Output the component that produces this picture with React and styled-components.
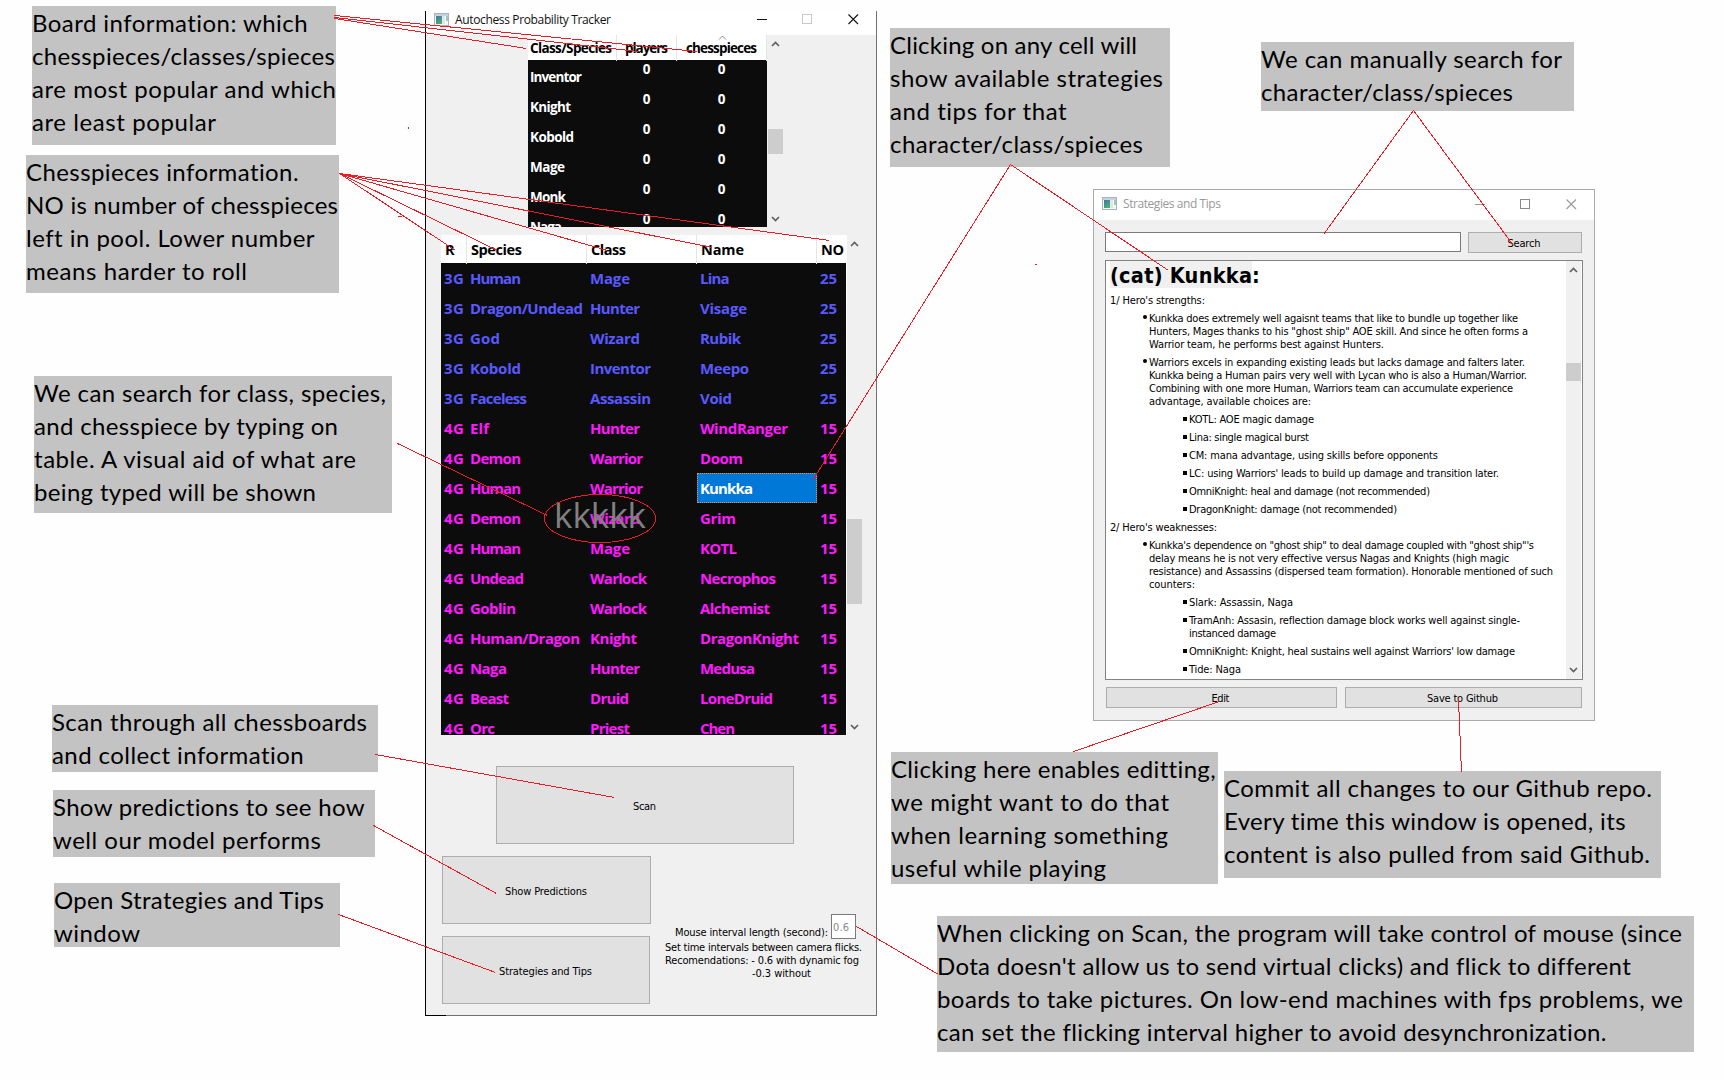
import React, { useLayoutEffect, useRef, useState } from "react";
import styled, { createGlobalStyle, css } from "styled-components";

const UI = `"DejaVu Sans Condensed", "DejaVu Sans", sans-serif`;
const TABLE = `"Open Sans", "Noto Sans", sans-serif`;
const NOTE = `Lato, "Open Sans", sans-serif`;

const GlobalStyle = createGlobalStyle`
  * { box-sizing: border-box; }
  body { margin: 0; background: #fefefe; overflow: hidden; }
`;

const Canvas = styled.main`
  position: relative;
  width: 1724px;
  height: 1080px;
  overflow: hidden;
  background: #fefefe;
  color: #000;
`;

/* ---------- text that is tracked to a given width ---------- */

const Run = styled.span`
  display: inline-block;
  white-space: pre;
`;

function Fit({ w, children }) {
  const ref = useRef(null);
  const [tracking, setTracking] = useState(0);
  useLayoutEffect(() => {
    const natural = ref.current.getBoundingClientRect().width;
    setTracking((w - natural) / Math.max(1, children.length - 1));
  }, [w, children]);
  return (
    <Run ref={ref} style={{ letterSpacing: `${tracking}px`, marginRight: `${-tracking}px` }}>
      {children}
    </Run>
  );
}

/* ---------- annotations ---------- */

const NoteBox = styled.div`
  position: absolute;
  left: ${(p) => p.$x}px;
  top: ${(p) => p.$y}px;
  width: ${(p) => p.$w}px;
  height: ${(p) => p.$h}px;
  background: #c3c3c3;
  font: 24px/33px ${NOTE};
`;

const NoteLine = styled.div`
  height: 33px;
  white-space: nowrap;
`;

const notes = [
  { box: [32, 6, 304, 139], lines: [["Board information: which", 276], ["chesspieces/classes/spieces", 303], ["are most popular and which", 304], ["are least popular", 184]] },
  { box: [26, 155, 313, 138], lines: [["Chesspieces information.", 273], ["NO is number of chesspieces", 312], ["left in pool. Lower number", 288], ["means harder to roll", 221]] },
  { box: [34, 376, 358, 137], lines: [["We can search for class, species,", 352], ["and chesspiece by typing on", 304], ["table. A visual aid of what are", 322], ["being typed will be shown", 282]] },
  { box: [52, 705, 326, 67], lines: [["Scan through all chessboards", 315], ["and collect information", 252]] },
  { box: [53, 790, 322, 67], lines: [["Show predictions to see how", 312], ["well our model performs", 268]] },
  { box: [54, 883, 286, 64], lines: [["Open Strategies and Tips", 270], ["window", 86]] },
  { box: [890, 28, 280, 139], lines: [["Clicking on any cell will", 247], ["show available strategies", 273], ["and tips for that", 177], ["character/class/spieces", 253]] },
  { box: [1261, 42, 313, 69], lines: [["We can manually search for", 301], ["character/class/spieces", 252]] },
  { box: [891, 752, 327, 132], lines: [["Clicking here enables editting,", 324], ["we might want to do that", 278], ["when learning something", 277], ["useful while playing", 215]] },
  { box: [1224, 771, 437, 107], lines: [["Commit all changes to our Github repo.", 428], ["Every time this window is opened, its", 402], ["content is also pulled from said Github.", 426]] },
  { box: [937, 916, 757, 136], lines: [["When clicking on Scan, the program will take control of mouse (since", 745], ["Dota doesn't allow us to send virtual clicks) and flick to different", 693], ["boards to take pictures. On low-end machines with fps problems, we", 746], ["can set the flicking interval higher to avoid desynchronization.", 670]] },
];

const Overlay = styled.svg`
  position: absolute;
  inset: 0;
  pointer-events: none;
  fill: none;
  stroke: #ed1c24;
  stroke-width: 1;
  shape-rendering: crispEdges;
`;

const pointers = [
  [334, 18, 526, 48], [334, 17, 638, 51], [334, 15, 697, 51],
  [339, 173, 455, 250], [339, 173, 497, 250], [339, 173, 607, 250], [339, 173, 712, 247], [339, 173, 829, 240],
  [397, 443, 547, 515],
  [1010, 164, 812, 480], [1010, 164, 1168, 270],
  [1413, 110, 1323, 234], [1413, 110, 1513, 245],
  [375, 754, 614, 797], [373, 825, 496, 893], [338, 914, 495, 972],
  [856, 926, 938, 974], [1073, 751, 1219, 701], [1458, 699, 1461, 772],
  [408, 126, 408, 128], [397, 216, 401, 216], [1034, 264, 1036, 264],
];

/* ---------- shared window parts ---------- */

const MainWindow = styled.section`
  position: absolute;
  left: 425px;
  top: 11px;
  width: 452px;
  height: 1005px;
  background: #f0f0f0;
  border: solid #707070;
  border-width: 0 1px 1px 0;
  border-left: 1px solid #000;
  font: 11px/13px ${UI};
  &::after {
    content: "";
    position: absolute;
    left: -1px;
    bottom: -1px;
    width: 21px;
    height: 1px;
    background: #000;
  }
`;

const TipsWindow = styled.section`
  position: absolute;
  left: 1093px;
  top: 189px;
  width: 502px;
  height: 532px;
  background: #f0f0f0;
  border: 1px solid #aaa;
  font: 11px/13px ${UI};
`;

const TitleBar = styled.header`
  display: flex;
  align-items: center;
  height: ${(p) => p.$h}px;
  padding: 0 ${(p) => p.$right}px ${(p) => p.$lift}px 8px;
  background: #fff;
  color: ${(p) => p.$ink};
  font: 12px/16px ${TABLE};
`;

const Title = styled.h1`
  flex: 1;
  margin: 0 0 0 5px;
  font: inherit;
`;

const Controls = styled.div`
  display: flex;
  gap: ${(p) => p.$gap}px;
`;

const Glyph = styled.svg`
  display: block;
  flex: none;
  fill: none;
  stroke: ${(p) => p.$c || "currentColor"};
`;

function AppIcon() {
  return (
    <Glyph width="16" height="14" viewBox="0 0 16 14" stroke="none">
      <defs>
        <linearGradient id="pane" x1="0" y1="0" x2="0.6" y2="1">
          <stop offset="0" stopColor="#3c77a8" />
          <stop offset="1" stopColor="#4fae72" />
        </linearGradient>
      </defs>
      <rect x="0.5" y="0.5" width="14" height="12" fill="#f4f6f8" stroke="#a9b3bc" />
      <rect x="1" y="1" width="13" height="2" fill="#c6d3df" stroke="none" />
      <rect x="2" y="3" width="6" height="8" fill="url(#pane)" stroke="none" />
      <rect x="8" y="3" width="3" height="8" fill="#e3e6e8" stroke="none" />
      <rect x="12" y="3" width="2" height="5" fill="#9cc6c4" stroke="none" />
    </Glyph>
  );
}

function WindowControls({ gap, maxColor }) {
  return (
    <Controls $gap={gap}>
      <Glyph width="11" height="11"><path d="M1 5.5H11" shapeRendering="crispEdges" /></Glyph>
      <Glyph width="11" height="11" $c={maxColor}><rect x="0.5" y="0.5" width="9" height="9" /></Glyph>
      <Glyph width="11" height="11"><path d="M0.5 0.5L10 10M10 0.5L0.5 10" strokeWidth="1.1" /></Glyph>
    </Controls>
  );
}

const Track = styled.div`
  display: flex;
  flex-direction: column;
  flex: none;
  width: 15px;
  height: ${(p) => p.$h}px;
  padding: ${(p) => p.$pad};
  background: #f0f0f0;
`;

const Thumb = styled.div`
  height: ${(p) => p.$h}px;
  margin: ${(p) => p.$gap}px 0 auto;
  background: #cdcdcd;
`;

const Arrow = styled(Glyph)`
  margin: 0 auto;
`;

function ScrollBar({ height, pad, thumbGap, thumb }) {
  return (
    <Track $h={height} $pad={pad}>
      <Arrow width="9" height="6" $c="#606060"><path d="M1 5L4.5 1.5L8 5" strokeWidth="1.7" /></Arrow>
      <Thumb $gap={thumbGap} $h={thumb} />
      <Arrow width="9" height="6" $c="#606060"><path d="M1 1L4.5 4.5L8 1" strokeWidth="1.7" /></Arrow>
    </Track>
  );
}

const Button = styled.button`
  display: flex;
  align-items: center;
  justify-content: center;
  flex: none;
  width: ${(p) => p.$w}px;
  height: ${(p) => p.$h}px;
  margin: 0;
  padding: ${(p) => p.$drop || 1}px ${(p) => (p.$drop ? 1 : 2)}px 0 0;
  border: 1px solid #adadad;
  background: #e1e1e1;
  color: #000;
  font: 11px/13px ${UI};
`;

/* ---------- main window tables ---------- */

const TableArea = styled.div`
  display: flex;
  margin: ${(p) => p.$m};
`;

const BoardTable = styled.div`
  width: 239px;
  height: 192px;
  margin-right: 1px;
  overflow: hidden;
  background: #0c0c0c;
  color: #fff;
  font: bold 13.5px/30px ${TABLE};
`;

const BoardRow = styled.div`
  display: grid;
  grid-template-columns: 89px 60px 90px;
  height: 30px;
`;

const BoardHead = styled(BoardRow)`
  height: 25px;
  background: #fff;
  color: #000;
  line-height: 26px;
`;

const headCell = css`
  white-space: nowrap;
  border-right: 1px solid #e5e5e5;
`;

const BoardHeadCell = styled.div`
  ${headCell}
  position: relative;
  padding-left: ${(p) => p.$pad}px;
`;

const SortMark = styled(Glyph)`
  position: absolute;
  left: 41px;
  top: 0;
`;

const BoardName = styled.div`
  padding: 1.5px 0 0 2px;
`;

const BoardCount = styled.div`
  text-align: center;
  line-height: 18px;
  padding-right: 1px;
`;

const boardRows = [["Inventor", 52], ["Knight", 41], ["Kobold", 44], ["Mage", 35], ["Monk", 36], ["Naga", 32]];

const PieceTable = styled.div`
  width: 406px;
  height: 500px;
  overflow: hidden;
  border-right: 1px solid #fff;
  background: #0c0c0c;
  font: bold 15px/30px ${TABLE};
`;

const PieceRow = styled.div`
  display: grid;
  grid-template-columns: 26px 120px 110px 120px 29px;
  height: 30px;
  color: ${(p) => p.$c};
`;

const PieceHead = styled(PieceRow)`
  height: 28px;
  margin-right: -1px;
  background: #fff;
  color: #000;
  font-size: 14.5px;
  line-height: 29px;
`;

const PieceHeadCell = styled.div`
  ${headCell}
  padding-left: 4px;
  &:last-child { border: 0; }
`;

const PieceCell = styled.div`
  padding-left: 3px;
  white-space: nowrap;
  ${(p) => p.$selected && css`
    background: #0078d7;
    color: #fff;
    outline: 1px dotted #f09040;
    outline-offset: -1px;
  `}
`;

const BLUE = "#5959ff";
const PINK = "#ff19ff";

const pieces = [
  ["3G", ["Human", 50], ["Mage", 39], ["Lina", 28.5], "25"],
  ["3G", ["Dragon/Undead", 112], ["Hunter", 49], ["Visage", 46], "25"],
  ["3G", ["God", 29], ["Wizard", 49], ["Rubik", 40], "25"],
  ["3G", ["Kobold", 50], ["Inventor", 60], ["Meepo", 48], "25"],
  ["3G", ["Faceless", 56], ["Assassin", 60], ["Void", 31], "25"],
  ["4G", ["Elf", 18], ["Hunter", 49], ["WindRanger", 87], "15"],
  ["4G", ["Demon", 50], ["Warrior", 52], ["Doom", 42], "15"],
  ["4G", ["Human", 50], ["Warrior", 52], ["Kunkka", 52], "15"],
  ["4G", ["Demon", 50], ["Wizard", 49], ["Grim", 35], "15"],
  ["4G", ["Human", 50], ["Mage", 39], ["KOTL", 36], "15"],
  ["4G", ["Undead", 53], ["Warlock", 56], ["Necrophos", 75], "15"],
  ["4G", ["Goblin", 45], ["Warlock", 56], ["Alchemist", 69], "15"],
  ["4G", ["Human/Dragon", 109], ["Knight", 46], ["DragonKnight", 98], "15"],
  ["4G", ["Naga", 36], ["Hunter", 49], ["Medusa", 54], "15"],
  ["4G", ["Beast", 38], ["Druid", 38], ["LoneDruid", 72], "15"],
  ["4G", ["Orc", 24], ["Priest", 39], ["Chen", 34], "15"],
];

const TypedText = styled.div`
  position: absolute;
  left: 128px;
  top: 478px;
  color: #808080;
  font: 35px/52px ${TABLE};
`;

/* ---------- main window footer ---------- */

const ScanArea = styled.div`
  padding: 31px 0 0 70px;
`;

const Footer = styled.div`
  display: flex;
  padding: 12px 0 0 16px;
`;

const ButtonColumn = styled.div`
  display: flex;
  flex-direction: column;
  gap: 12px;
  width: 223px;
`;

const Settings = styled.div`
  padding-top: 58px;
`;

const IntervalRow = styled.label`
  display: flex;
  align-items: flex-end;
  justify-content: space-between;
  width: 191px;
  height: 25px;
  margin-bottom: 2px;
  padding-left: 10px;
`;

const IntervalBox = styled.span`
  width: 25px;
  height: 25px;
  border: 1px solid #7a7a7a;
  background: #fff;
  color: #8a8a8a;
  padding-left: 1px;
  line-height: 25px;
`;

const Hint = styled.div`
  height: 13px;
  padding-left: ${(p) => p.$in || 0}px;
  white-space: nowrap;
`;

/* ---------- tips window ---------- */

const TipsBody = styled.div`
  padding: 12px 0 0 11px;
`;

const SearchRow = styled.div`
  display: flex;
  gap: 7px;
  height: 21px;
`;

const SearchField = styled.div`
  width: 356px;
  height: 20px;
  border: 1px solid #7a7a7a;
  background: #fff;
`;

const Document = styled.div`
  display: flex;
  justify-content: space-between;
  width: 478px;
  height: 420px;
  margin-top: 7px;
  padding-right: 1px;
  border: 1px solid #828282;
  background: #fff;
`;

const Page = styled.div`
  padding-left: 4px;
`;

const Heading = styled.h2`
  margin: 0 0 6px;
  height: 27px;
  font: bold 21.5px/29px ${UI};
`;

const Mark = styled.span`
  display: inline-block;
  height: 27px;
  background: #f0f0f0;
`;

const Para = styled.div`
  position: relative;
  margin-bottom: 5px;
  padding-left: ${(p) => p.$level * 40 - (p.$level ? 1 : 0)}px;
`;

const Bullet = styled.i`
  position: absolute;
  left: ${(p) => p.$level * 40 - 7}px;
  top: ${(p) => (p.$level === 1 ? 3 : 4)}px;
  width: 4px;
  height: 4px;
  border-radius: ${(p) => (p.$level === 1 ? 2 : 0)}px;
  background: #000;
`;

const Line = styled.div`
  height: 13px;
  white-space: nowrap;
`;

const tips = [
  [0, [["1/ Hero's strengths:", 95]]],
  [1, [["Kunkka does extremely well agaisnt teams that like to bundle up together like", 369], ["Hunters, Mages thanks to his \"ghost ship\" AOE skill. And since he often forms a", 379], ["Warrior team, he performs best against Hunters.", 235]]],
  [1, [["Warriors excels in expanding existing leads but lacks damage and falters later.", 376], ["Kunkka being a Human pairs very well with Lycan who is also a Human/Warrior.", 378], ["Combining with one more Human, Warriors team can accumulate experience", 364], ["advantage, available choices are:", 162]]],
  [2, [["KOTL: AOE magic damage", 125]]],
  [2, [["Lina: single magical burst", 120]]],
  [2, [["CM: mana advantage, using skills before opponents", 249]]],
  [2, [["LC: using Warriors' leads to build up damage and transition later.", 310]]],
  [2, [["OmniKnight: heal and damage (not recommended)", 241]]],
  [2, [["DragonKnight: damage (not recommended)", 208]]],
  [0, [["2/ Hero's weaknesses:", 107]]],
  [1, [["Kunkka's dependence on \"ghost ship\" to deal damage coupled with \"ghost ship\"'s", 385], ["delay means he is not very effective versus Nagas and Knights (high magic", 360], ["resistance) and Assassins (dispersed team formation). Honorable mentioned of such", 404], ["counters:", 46]]],
  [2, [["Slark: Assassin, Naga", 104]]],
  [2, [["TramAnh: Assasin, reflection damage block works well against single-", 331], ["instanced damage", 87]]],
  [2, [["OmniKnight: Knight, heal sustains well against Warriors' low damage", 326]]],
  [2, [["Tide: Naga", 52]]],
];

const Actions = styled.div`
  display: flex;
  gap: 8px;
  padding: 7px 0 0 1px;
`;

export default function App() {
  return (
    <Canvas>
      <GlobalStyle />

      <MainWindow>
        <TitleBar $h={24} $right={17} $lift={7} $ink="#111">
          <AppIcon />
          <Title><Fit w={156}>Autochess Probability Tracker</Fit></Title>
          <WindowControls gap={35} maxColor="#c8c8c8" />
        </TitleBar>

        <TableArea $m="0 0 0 102px">
          <BoardTable>
            <BoardHead>
              <BoardHeadCell $pad={2}><Fit w={82}>Class/Species</Fit></BoardHeadCell>
              <BoardHeadCell $pad={8}><Fit w={43}>players</Fit></BoardHeadCell>
              <BoardHeadCell $pad={9}>
                <SortMark width="9" height="5" $c="#888"><path d="M1 4.5L4.5 1L8 4.5" /></SortMark>
                <Fit w={71}>chesspieces</Fit>
              </BoardHeadCell>
            </BoardHead>
            {boardRows.map(([name, w]) => (
              <BoardRow key={name}>
                <BoardName><Fit w={w}>{name}</Fit></BoardName>
                <BoardCount>0</BoardCount>
                <BoardCount>0</BoardCount>
              </BoardRow>
            ))}
          </BoardTable>
          <ScrollBar height={192} pad="6px 0 5px" thumbGap={82} thumb={25} />
        </TableArea>

        <TableArea $m="8px 0 0 15px">
          <PieceTable>
            <PieceHead>
              <PieceHeadCell>R</PieceHeadCell>
              <PieceHeadCell><Fit w={51}>Species</Fit></PieceHeadCell>
              <PieceHeadCell><Fit w={35}>Class</Fit></PieceHeadCell>
              <PieceHeadCell><Fit w={43}>Name</Fit></PieceHeadCell>
              <PieceHeadCell><Fit w={23}>NO</Fit></PieceHeadCell>
            </PieceHead>
            {pieces.map(([rank, species, cls, name, count], i) => (
              <PieceRow key={i} $c={rank === "3G" ? BLUE : PINK}>
                <PieceCell><Fit w={20}>{rank}</Fit></PieceCell>
                <PieceCell><Fit w={species[1] + 1}>{species[0]}</Fit></PieceCell>
                <PieceCell><Fit w={cls[1] + 1}>{cls[0]}</Fit></PieceCell>
                <PieceCell $selected={name[0] === "Kunkka"}><Fit w={name[1] + 1}>{name[0]}</Fit></PieceCell>
                <PieceCell><Fit w={17}>{count}</Fit></PieceCell>
              </PieceRow>
            ))}
          </PieceTable>
          <ScrollBar height={500} pad="6px 0 5px" thumbGap={272} thumb={85} />
        </TableArea>
        <TypedText><Fit w={92}>kkkkk</Fit></TypedText>

        <ScanArea>
          <Button $w={298} $h={78} $drop={3}><Fit w={23}>Scan</Fit></Button>
        </ScanArea>

        <Footer>
          <ButtonColumn>
            <Button $w={209} $h={68} $drop={3}><Fit w={82}>Show Predictions</Fit></Button>
            <Button $w={208} $h={68} $drop={3}><Fit w={93}>Strategies and Tips</Fit></Button>
          </ButtonColumn>
          <Settings>
            <IntervalRow>
              <Fit w={153}>Mouse interval length (second):</Fit>
              <IntervalBox><Fit w={16}>0.6</Fit></IntervalBox>
            </IntervalRow>
            <Hint><Fit w={197}>Set time intervals between camera flicks.</Fit></Hint>
            <Hint><Fit w={194}>Recomendations: - 0.6 with dynamic fog</Fit></Hint>
            <Hint $in={87}><Fit w={59}>-0.3 without</Fit></Hint>
          </Settings>
        </Footer>
      </MainWindow>

      <TipsWindow>
        <TitleBar $h={30} $right={17} $lift={2} $ink="#999">
          <AppIcon />
          <Title><Fit w={98}>Strategies and Tips</Fit></Title>
          <WindowControls gap={35} maxColor="#8a8a8a" />
        </TitleBar>
        <TipsBody>
          <SearchRow>
            <SearchField />
            <Button $w={114} $h={21}><Fit w={33}>Search</Fit></Button>
          </SearchRow>
          <Document>
            <Page>
              <Heading><Mark><Fit w={142}>(cat) Kunkka</Fit></Mark>:</Heading>
              {tips.map(([level, lines], i) => (
                <Para key={i} $level={level}>
                  {level > 0 && <Bullet $level={level} />}
                  {lines.map(([text, w]) => (
                    <Line key={text}><Fit w={w}>{text}</Fit></Line>
                  ))}
                </Para>
              ))}
            </Page>
            <ScrollBar height={418} pad="6px 0" thumbGap={90} thumb={18} />
          </Document>
          <Actions>
            <Button $w={231} $h={21}><Fit w={18}>Edit</Fit></Button>
            <Button $w={237} $h={21}><Fit w={71}>Save to Github</Fit></Button>
          </Actions>
        </TipsBody>
      </TipsWindow>

      {notes.map(({ box: [x, y, w, h], lines }) => (
        <NoteBox key={`${x}-${y}`} $x={x} $y={y} $w={w} $h={h}>
          {lines.map(([text, width]) => (
            <NoteLine key={text}><Fit w={width}>{text}</Fit></NoteLine>
          ))}
        </NoteBox>
      ))}

      <Overlay width="1724" height="1080" viewBox="0 0 1724 1080">
        {pointers.map((p) => (
          <line key={p.join()} x1={p[0] + 0.5} y1={p[1] + 0.5} x2={p[2] + 0.5} y2={p[3] + 0.5} />
        ))}
        <ellipse cx="600" cy="518.5" rx="55.5" ry="24" />
      </Overlay>
    </Canvas>
  );
}
